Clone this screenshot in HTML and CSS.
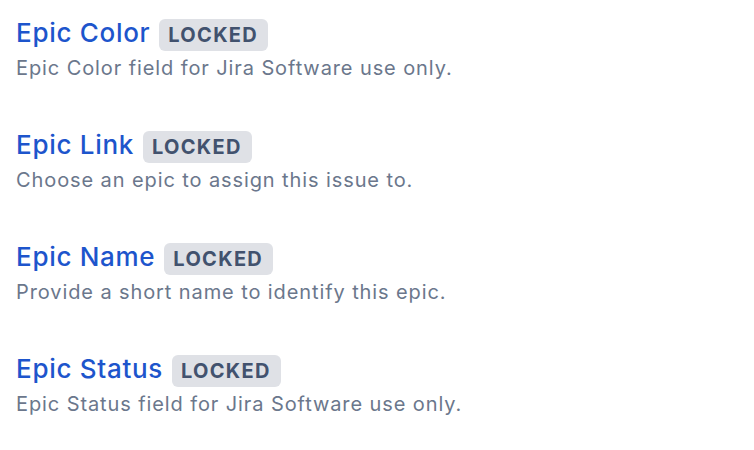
FILE: index.html
```html
<!DOCTYPE html>
<html>
<head>
<meta charset="utf-8">
<link rel="stylesheet" href="styles.css">
</head>
<body>
<div class="list">
  <div class="field">
    <div class="head"><span class="name">Epic Color</span><span class="lozenge">LOCKED</span></div>
    <div class="desc">Epic Color field for Jira Software use only.</div>
  </div>
  <div class="field">
    <div class="head"><span class="name">Epic Link</span><span class="lozenge">LOCKED</span></div>
    <div class="desc">Choose an epic to assign this issue to.</div>
  </div>
  <div class="field">
    <div class="head"><span class="name">Epic Name</span><span class="lozenge">LOCKED</span></div>
    <div class="desc">Provide a short name to identify this epic.</div>
  </div>
  <div class="field">
    <div class="head"><span class="name">Epic Status</span><span class="lozenge">LOCKED</span></div>
    <div class="desc">Epic Status field for Jira Software use only.</div>
  </div>
</div>
</body>
</html>
```

FILE: styles.css
```css
html, body {
  margin: 0;
  background: #fff;
}
body {
  font-family: Inter, "Noto Sans", sans-serif;
}
.list {
  display: flex;
  flex-direction: column;
  gap: 49px;
  padding: 17px 16px 0;
}
.field {
  display: flex;
  flex-direction: column;
  gap: 7px;
}
.head {
  display: flex;
  align-items: baseline;
  gap: 9px;
  height: 32px;
}
.name {
  font-size: 26px;
  color: #1d55cc;
  font-weight: 500;
  letter-spacing: 0.7px;
}
.lozenge {
  background: #dfe1e6;
  color: #42526e;
  font-weight: 700;
  font-size: 20px;
  border-radius: 6px;
  padding: 0 10px 0 9px;
  height: 32px;
  line-height: 32px;
  letter-spacing: 1.3px;
}
.desc {
  font-size: 20px;
  color: #6b778c;
  line-height: 24px;
  letter-spacing: 0.9px;
}
```
